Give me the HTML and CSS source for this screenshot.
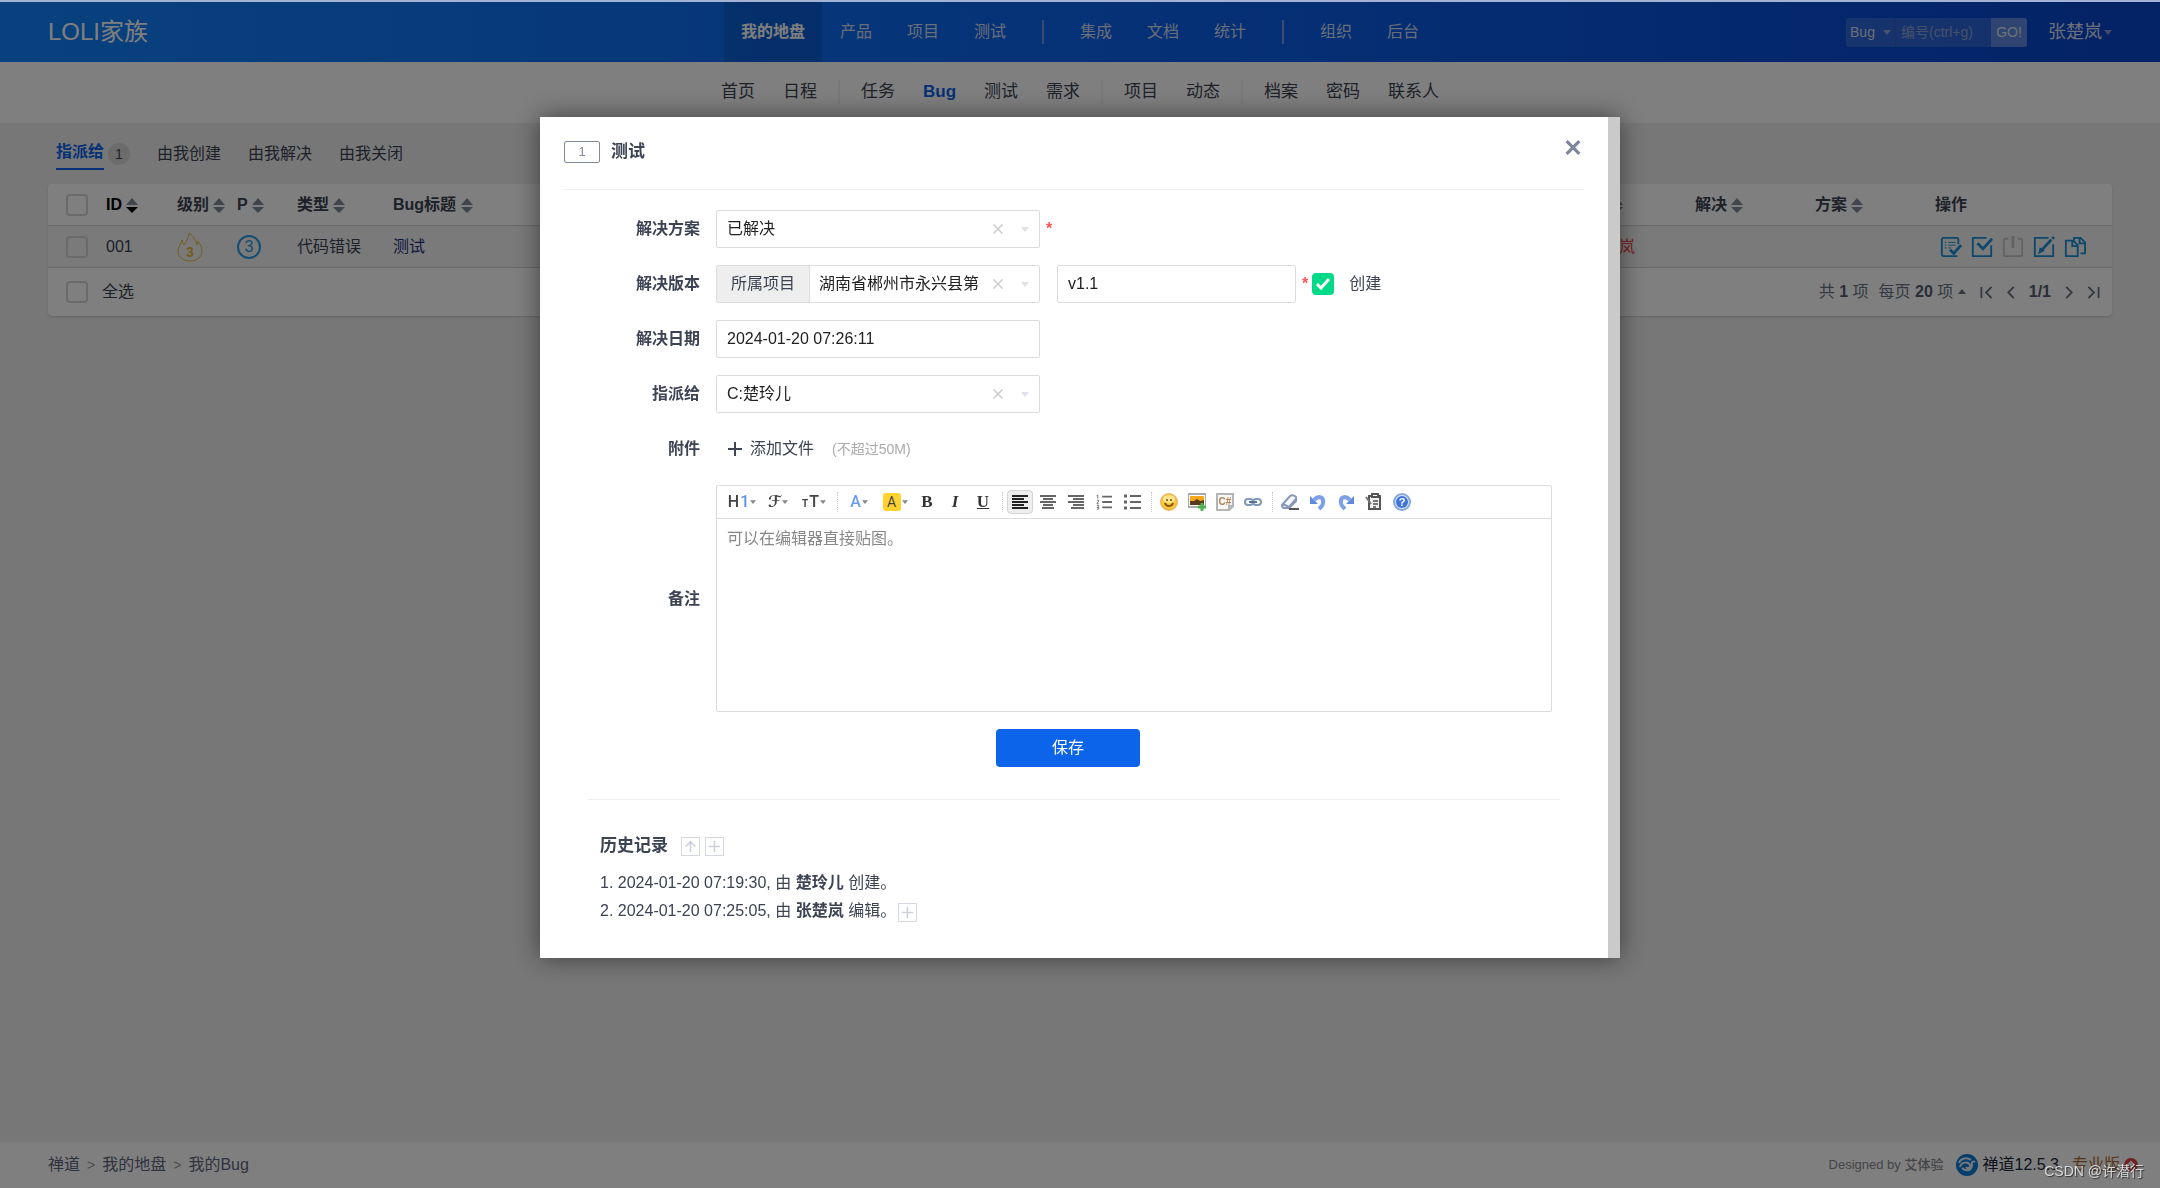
FILE: index.html
```html
<!DOCTYPE html>
<html lang="zh-CN">
<head>
<meta charset="utf-8">
<title>我的Bug - 禅道</title>
<link rel="stylesheet" href="styles.css">
</head>
<body>
<svg class="sprite" aria-hidden="true">
  <symbol id="sort" viewBox="0 0 12 15"><path d="M6 0l6 7H0zM0 9h12l-6 6z"/></symbol>
  <symbol id="caret" viewBox="0 0 8 5"><path d="M0 0h8L4 5z"/></symbol>
  <symbol id="cross" viewBox="0 0 16 16"><path d="M2 2l12 12M14 2L2 14"/></symbol>
  <symbol id="plus" viewBox="0 0 16 16"><path d="M8 1v14M1 8h14"/></symbol>
</svg>

<header class="topbar">
  <h1 class="brand">LOLI家族</h1>
  <nav class="mainnav">
    <a class="active" href="#">我的地盘</a><a href="#">产品</a><a href="#">项目</a><a href="#">测试</a>
    <span class="bar"></span>
    <a href="#">集成</a><a href="#">文档</a><a href="#">统计</a>
    <span class="bar"></span>
    <a href="#">组织</a><a href="#">后台</a>
  </nav>
  <div class="tools">
    <form class="search">
      <button class="kind" type="button">Bug <svg class="caret"><use href="#caret"/></svg></button>
      <input type="text" aria-label="编号" placeholder="编号(ctrl+g)">
      <button class="go" type="button">GO!</button>
    </form>
    <a class="user" href="#">张楚岚<svg class="caret"><use href="#caret"/></svg></a>
  </div>
</header>

<nav class="subnav">
  <a href="#">首页</a><a href="#">日程</a><span class="bar"></span>
  <a href="#">任务</a><a class="active" href="#">Bug</a><a href="#">测试</a><a href="#">需求</a><span class="bar"></span>
  <a href="#">项目</a><a href="#">动态</a><span class="bar"></span>
  <a href="#">档案</a><a href="#">密码</a><a href="#">联系人</a>
</nav>

<main class="main">
  <div class="tabs">
    <a class="active" href="#">指派给</a><span class="count">1</span>
    <a href="#">由我创建</a><a href="#">由我解决</a><a href="#">由我关闭</a>
  </div>
  <section class="card">
    <table class="bugs">
      <colgroup><col class="c-id"><col class="c-level"><col class="c-level"><col class="c-type"><col><col class="c-user"><col class="c-user"><col class="c-user"><col class="c-user"><col class="c-act"></colgroup>
      <thead>
        <tr>
          <th><div class="idcell"><input type="checkbox" aria-label="选择全部"><span class="sorted">ID <svg class="sort" viewBox="0 0 12 15"><path class="dim" d="M6 0l6 7H0z"/><path d="M0 9h12l-6 6z"/></svg></span></div></th>
          <th>级别 <svg class="sort"><use href="#sort"/></svg></th>
          <th>P <svg class="sort"><use href="#sort"/></svg></th>
          <th>类型 <svg class="sort"><use href="#sort"/></svg></th>
          <th>Bug标题 <svg class="sort"><use href="#sort"/></svg></th>
          <th>创建 <svg class="sort"><use href="#sort"/></svg></th>
          <th>指派 <svg class="sort"><use href="#sort"/></svg></th>
          <th>解决 <svg class="sort"><use href="#sort"/></svg></th>
          <th>方案 <svg class="sort"><use href="#sort"/></svg></th>
          <th>操作</th>
        </tr>
      </thead>
      <tbody>
        <tr>
          <td><div class="idcell"><input type="checkbox" aria-label="选择 001"><span>001</span></div></td>
          <td><svg class="flame" viewBox="0 0 26 30"><path d="M12 1c0 5-3 8-5 12-1-1-2-3-2-5-1 4-4 7-4 11 0 6 5 10 12 10s12-4 12-10c0-4-2-7-4-10 0 2-1 3-1 4-1-5-4-9-8-12z"/><text x="13" y="25">3</text></svg></td>
          <td><span class="pri">3</span></td>
          <td>代码错误</td>
          <td><a class="title" href="#">测试</a></td>
          <td>楚玲儿</td>
          <td><a class="assigned" href="#">张楚岚</a></td>
          <td></td>
          <td></td>
          <td>
            <div class="actions">
              <button aria-label="确认"><svg viewBox="0 0 24 24"><path d="M20 9V4q0-2-2-2H4Q2 2 2 4v16q0 2 2 2h15"/><path class="thin" d="M5 7h2M9 7h8M5 10h2M9 10h8M5 13h2M9 13h3"/><path class="bold" d="M11 15l4 4 8-9"/></svg></button>
              <button aria-label="解决"><svg viewBox="0 0 24 24"><path d="M17 2H2v20h20V10"/><path class="bold" d="M7 8l6 6L23 3"/></svg></button>
              <button aria-label="关闭" disabled><svg viewBox="0 0 24 24"><path d="M7 3H4Q2 3 2 5v15q0 2 2 2h16q2 0 2-2V5q0-2-2-2h-3"/><path class="bold" d="M12 0v13"/></svg></button>
              <button aria-label="编辑"><svg viewBox="0 0 24 24"><path d="M17 2H2v20h20V9"/><path class="bold" d="M9 16L20 4M21 3l2-2"/><path d="M7 18l1-4 3 2z"/></svg></button>
              <button aria-label="复制"><svg viewBox="0 0 24 24"><path d="M2 5h8l5 5v12H2zM9 5v6h6M11 5V2h7l5 5v12h-5M17 2v6h6"/></svg></button>
            </div>
          </td>
        </tr>
      </tbody>
    </table>
    <div class="cardfoot">
      <label class="all"><input type="checkbox">全选</label>
      <div class="pager">
        <span>共 <b>1</b> 项</span>
        <button class="per">每页 <b>20</b> 项 <svg class="caret up"><use href="#caret"/></svg></button>
        <button aria-label="首页"><svg class="wide" viewBox="0 0 13 14"><path d="M1 1v12M12 1L6 7l6 6"/></svg></button>
        <button aria-label="上一页"><svg viewBox="0 0 8 14"><path d="M7 1L1 7l6 6"/></svg></button>
        <b>1/1</b>
        <button aria-label="下一页"><svg viewBox="0 0 8 14"><path d="M1 1l6 6-6 6"/></svg></button>
        <button aria-label="末页"><svg class="wide" viewBox="0 0 13 14"><path d="M12 1v12M1 1l6 6-6 6"/></svg></button>
      </div>
    </div>
  </section>
</main>

<footer class="footer">
  <div class="crumbs"><a href="#">禅道</a><i>&gt;</i><a href="#">我的地盘</a><i>&gt;</i><a href="#">我的Bug</a></div>
  <div class="about">
    <span class="by">Designed by <b>艾体验</b></span>
    <a class="version" href="#"><svg viewBox="0 0 22 22"><circle cx="11" cy="11" r="11"/><path d="M3 9c2-5 8-6 12-3M4 13c1-5 8-6 10-2 1 3-3 4-4 2M19 8c-2-1-4 0-3 3 0 4-3 6-6 5-2 0-3-1-4-2"/></svg>禅道12.5.3</a>
    <a class="pro" href="#">专业版<svg viewBox="0 0 14 14"><circle cx="7" cy="7" r="7"/><path d="M7 11V4M4 7l3-3 3 3"/></svg></a>
  </div>
</footer>

<div class="backdrop">
  <div class="modal" role="dialog" aria-labelledby="dlg-title">
    <div class="dlghead">
      <span class="num">1</span>
      <h2 id="dlg-title">测试</h2>
      <button class="close" aria-label="关闭"><svg><use href="#cross"/></svg></button>
    </div>
    <form class="fields">
      <label for="resolution">解决方案</label>
      <div class="line">
        <div class="picker short">
          <select id="resolution"><option>已解决</option></select>
          <button type="button" aria-label="清除"><svg><use href="#cross"/></svg></button>
          <svg class="caret"><use href="#caret"/></svg>
        </div>
        <span class="req">*</span>
      </div>

      <label for="project">解决版本</label>
      <div class="line">
        <div class="picker short">
          <span class="addon">所属项目</span>
          <select id="project" class="tight"><option>湖南省郴州市永兴县第</option></select>
          <button type="button" aria-label="清除"><svg><use href="#cross"/></svg></button>
          <svg class="caret"><use href="#caret"/></svg>
        </div>
        <input class="box build" type="text" aria-label="版本" value="v1.1">
        <span class="req">*</span>
        <label class="create"><input type="checkbox" checked>创建</label>
      </div>

      <label for="date">解决日期</label>
      <div class="line"><input id="date" class="box short" type="text" value="2024-01-20 07:26:11"></div>

      <label for="assign">指派给</label>
      <div class="line">
        <div class="picker short">
          <select id="assign"><option>C:楚玲儿</option></select>
          <button type="button" aria-label="清除"><svg><use href="#cross"/></svg></button>
          <svg class="caret"><use href="#caret"/></svg>
        </div>
      </div>

      <span class="label">附件</span>
      <div class="line">
        <button class="attach" type="button"><svg><use href="#plus"/></svg>添加文件</button>
        <span class="hint">(不超过50M)</span>
      </div>

      <label for="comment">备注</label>
      <div class="editor">
        <div class="toolbar">
          <button type="button" class="drop head">H<em>1</em><svg class="caret"><use href="#caret"/></svg></button>
          <button type="button" class="drop script">ℱ<svg class="caret"><use href="#caret"/></svg></button>
          <button type="button" class="drop head"><small>T</small>T<svg class="caret"><use href="#caret"/></svg></button>
          <span class="dots"></span>
          <button type="button" class="drop color">A<svg class="caret"><use href="#caret"/></svg></button>
          <button type="button" class="drop"><mark>A</mark><svg class="caret"><use href="#caret"/></svg></button>
          <button type="button" class="serif">B</button>
          <button type="button" class="serif it">I</button>
          <button type="button" class="serif un">U</button>
          <span class="dots"></span>
          <button type="button" class="on" aria-label="左对齐"><svg viewBox="0 0 18 16"><path d="M1 2h16M1 5h12M1 8h16M1 11h12M1 14h16"/></svg></button>
          <button type="button" aria-label="居中"><svg viewBox="0 0 18 16"><path d="M1 2h16M4 5h10M1 8h16M4 11h10M3 14h12"/></svg></button>
          <button type="button" aria-label="右对齐"><svg viewBox="0 0 18 16"><path d="M1 2h16M6 5h11M1 8h16M6 11h11M4 14h13"/></svg></button>
          <button type="button" aria-label="编号"><svg viewBox="0 0 18 18"><path d="M7 3h11M7 9h11M7 15h11"/><path class="fine" d="M1 2l1-1v4M1 7h2v1L1 11h2M1 13h2v4H1M1 15h2"/></svg></button>
          <button type="button" aria-label="项目符号"><svg viewBox="0 0 18 16"><path d="M7 2h11M7 8h11M7 14h11"/><path class="bul" d="M1 2h3M1 8h3M1 14h3"/></svg></button>
          <span class="dots"></span>
          <button type="button" aria-label="表情"><svg class="art" viewBox="0 0 18 18"><circle cx="9" cy="9" r="8" fill="#fcc83c" stroke="#eeb857"/><ellipse cx="9" cy="6" rx="6" ry="4" fill="#fde68a"/><path d="M5 10c1 4 7 4 8 0" fill="none" stroke="#8a5a10"/><circle cx="7" cy="7" r="1" fill="#6b4a10"/><circle cx="11" cy="7" r="1" fill="#6b4a10"/></svg></button>
          <button type="button" aria-label="图片"><svg class="art" viewBox="0 0 18 18"><path d="M0 1h18v13H0z" fill="#fff" stroke="#aaa"/><path d="M2 3h14v9H2z" fill="#f7a81b"/><path d="M2 8l4 0 3-2 3 2 4-1v5H2z" fill="#5a3c1c"/><path d="M14 10v8M10 14h8" stroke="#4caf50" stroke-width="3"/></svg></button>
          <button type="button" aria-label="代码"><svg class="art" viewBox="0 0 18 18"><path d="M1 1h16v12l-4 4H1z" fill="#f7f7f7" stroke="#b5b5b5"/><path d="M17 13h-4v4z" fill="#ddd" stroke="#b5b5b5"/><text x="9" y="12">C#</text></svg></button>
          <button type="button" aria-label="链接"><svg class="art" viewBox="0 0 18 18"><g fill="none" stroke="#8298b8" stroke-width="2"><rect x="1" y="6" width="8" height="6" rx="3"/><rect x="9" y="6" width="8" height="6" rx="3"/></g><path d="M5 9h8" stroke="#5c7396"/></svg></button>
          <span class="dots"></span>
          <button type="button" aria-label="清除格式"><svg class="art" viewBox="0 0 18 18"><path d="M1 12L9 3q3-2 6 1v4l-7 7H3q-2 0-2-3z" fill="#f4f7fc" stroke="#8698bb"/><path d="M1 12q4-1 7 3M8 14l7-8" fill="none" stroke="#8698bb"/><path d="M8 16h10" stroke="#555"/></svg></button>
          <button type="button" aria-label="撤销"><svg class="art" viewBox="0 0 18 18"><path d="M5 7c5-5 10-3 9 3 0 3-2 4-4 6" fill="none" stroke="#7ba0e8" stroke-width="4"/><path d="M1 3v8h8z" fill="#5f8ae0"/></svg></button>
          <button type="button" aria-label="重做"><svg class="art" viewBox="0 0 18 18"><path d="M13 7C8 2 3 4 4 10c0 3 2 4 4 6" fill="none" stroke="#7ba0e8" stroke-width="4"/><path d="M17 3v8H9z" fill="#5f8ae0"/></svg></button>
          <button type="button" aria-label="粘贴"><svg class="art" viewBox="0 0 18 18"><path d="M4 3h11v13H4z" fill="#eee" stroke="#555" stroke-width="2"/><path d="M7 1h6v3H7z" fill="#fff" stroke="#555"/><path d="M8 8h5M8 11h5M8 14h3M1 4l5 7" stroke="#777"/></svg></button>
          <button type="button" aria-label="帮助"><svg class="art" viewBox="0 0 18 18"><circle cx="9" cy="9" r="8" fill="#dbe8fb" stroke="#86a8dd"/><circle cx="9" cy="9" r="6" fill="#3f74de"/><text class="q" x="9" y="13">?</text></svg></button>
        </div>
        <textarea id="comment" placeholder="可以在编辑器直接贴图。"></textarea>
      </div>

      <button class="save" type="button">保存</button>
    </form>
    <section class="history">
      <div class="histhead">
        <h3>历史记录</h3>
        <button class="sq" aria-label="倒序"><svg viewBox="0 0 16 16"><path d="M8 15V2M2 8l6-6 6 6"/></svg></button>
        <button class="sq" aria-label="展开"><svg><use href="#plus"/></svg></button>
      </div>
      <ol>
        <li>1. 2024-01-20 07:19:30, 由 <b>楚玲儿</b> 创建。</li>
        <li>2. 2024-01-20 07:25:05, 由 <b>张楚岚</b> 编辑。<button class="sq" aria-label="展开详情"><svg><use href="#plus"/></svg></button></li>
      </ol>
    </section>
  </div>
</div>
<div class="mark">CSDN @许潜行</div>
</body>
</html>
```
FILE: styles.css
```css
* { box-sizing: border-box; }
body {
  margin: 0;
  min-height: 100vh;
  display: flex;
  flex-direction: column;
  border-top: 2px solid #a3b3d3;
  background: #efefef;
  color: #3c4353;
  font: 16px/24px "Liberation Sans", Arial, "Noto Sans CJK SC", sans-serif;
}
a { color: inherit; text-decoration: none; }
button, input, select, textarea { font: inherit; color: inherit; }
button { padding: 0; border: 0; background: none; }
h1, h2, h3, ol { margin: 0; padding: 0; }
.sprite { display: none; }
.caret { width: 8px; height: 5px; fill: currentColor; flex: none; }

/* top bar */
.topbar {
  display: grid;
  grid-template-columns: 1fr auto 1fr;
  align-items: center;
  height: 60px;
  padding: 0 48px;
  background: linear-gradient(90deg, #1183fb 0%, #0c64f0 50%, #0845cc 100%);
  color: #fff;
}
.brand { font-size: 24px; line-height: 60px; font-weight: 400; }
.mainnav { display: flex; align-items: center; gap: 1px; color: #d4dcf0; }
.mainnav a { padding: 0 17px; line-height: 60px; }
.mainnav .active { background: rgba(0, 0, 0, .12); color: #fff; font-weight: 700; }
.mainnav .bar { width: 2px; height: 24px; margin: 0 18px; background: #7a9be0; }
.tools { display: flex; justify-content: flex-end; align-items: center; gap: 21px; color: #d8dff0; }
.search { display: flex; align-items: stretch; height: 29px; font-size: 14px; line-height: 29px; }
.search .kind { width: 49px; background: rgba(255, 255, 255, .15); border-radius: 3px 0 0 3px; display: flex; align-items: center; justify-content: space-around; }
.search .caret { fill: #8fa5d8; }
.search input { width: 96px; padding: 0 5px; border: 0; border-left: 1px solid #3a5cb0; background: rgba(255, 255, 255, .15); }
.search input::placeholder { color: #8fa2d2; opacity: 1; }
.search .go { width: 36px; background: rgba(255, 255, 255, .35); border-radius: 0 3px 3px 0; color: #dfe5f2; }
.user { display: flex; align-items: center; gap: 2px; font-size: 18px; }
.user .caret { fill: #7f97d0; }

/* second level navigation */
.subnav { display: flex; justify-content: center; align-items: center; height: 61px; padding-bottom: 1px; background: #fff; font-size: 17px; line-height: 24px; }
.subnav a { padding: 0 14px; }
.subnav .active { color: #0c64eb; font-weight: 700; }
.subnav .bar { width: 2px; height: 24px; margin: 0 7px; background: #f0f0f0; }

/* list */
.main { padding: 14px 48px; }
.tabs { display: flex; align-items: center; height: 33px; margin: 0 8px 14px; gap: 27px; }
.tabs .active { height: 33px; line-height: 30px; border-bottom: 2px solid #0c64eb; color: #0c64eb; font-weight: 700; margin-right: -23px; }
.tabs .count { width: 22px; height: 22px; border-radius: 11px; background: #d8d8d8; font-size: 14px; line-height: 22px; text-align: center; }
.card { background: #fff; border-radius: 4px; box-shadow: 0 1px 2px rgba(0, 0, 0, .15); }
.bugs { width: 100%; table-layout: fixed; border-collapse: separate; border-spacing: 0; }
.c-id { width: 124px; }
.c-level { width: 60px; }
.c-type { width: 96px; }
.c-user { width: 120px; }
.c-act { width: 182px; }
.bugs th, .bugs td { height: 42px; padding: 0 0 0 5px; border-bottom: 1px solid #d2d2d2; text-align: left; white-space: nowrap; }
.bugs td { background: #f5f5f5; }
.bugs td > svg, .pri { vertical-align: middle; }
.idcell { display: flex; align-items: center; gap: 18px; padding-left: 13px; }
.sorted, .sorted .sort { color: #000; fill: #000; }
.sorted .dim { fill: #838a9d; }
.sort { width: 12px; height: 15px; fill: #838a9d; vertical-align: -3px; }
input[type="checkbox"] { appearance: none; width: 22px; height: 22px; margin: 0; border: 2px solid #d4d4d4; border-radius: 4px; background: #fff; flex: none; }
.bugs input[type="checkbox"], .cardfoot input[type="checkbox"] { background: transparent; }
.flame { width: 26px; height: 30px; fill: none; stroke: #e8b93a; stroke-width: 1; }
.flame text { fill: #e8b93a; stroke: none; font-size: 14px; font-weight: 700; text-anchor: middle; }
.pri { display: inline-block; width: 24px; height: 24px; border: 2px solid #2b9be8; border-radius: 12px; color: #2b9be8; line-height: 20px; text-align: center; }
.title { color: #1c2d80; }
.assigned { padding-left: 12px; color: #f04848; }
.actions { display: flex; gap: 9px; padding-left: 5px; }
.actions button { width: 22px; height: 22px; }
.actions svg { display: block; width: 22px; height: 22px; fill: none; stroke: #1a8fd8; stroke-width: 2; overflow: visible; }
.actions :disabled svg { stroke: #c4c4c4; }
.actions .thin { stroke-width: 1; }
.actions .bold { stroke-width: 3; }
.cardfoot { display: flex; justify-content: space-between; align-items: center; height: 48px; padding: 0 12px 0 18px; }
.all { display: flex; align-items: center; gap: 14px; }
.pager { display: flex; align-items: center; gap: 14px; color: #6b7283; }
.pager > span { margin-right: -4px; }
.pager svg { display: block; width: 8px; height: 13px; fill: none; stroke: #6b7283; stroke-width: 2; }
.pager .wide { width: 13px; }
.pager .up { display: inline-block; width: 8px; height: 5px; fill: #6b7283; stroke: none; vertical-align: 3px; transform: rotate(180deg); }
.pager b { color: #555c6e; }

/* page footer */
.footer { display: flex; justify-content: space-between; align-items: center; height: 46px; margin-top: auto; padding: 0 22px 0 48px; background: #fff; }
.crumbs { display: flex; gap: 7px; color: #5f6680; }
.crumbs i { font-style: normal; font-size: 14px; color: #a0a0a0; }
.about { display: flex; align-items: center; gap: 13px; }
.by { font-size: 13px; color: #8a8a8f; }
.by b { font-weight: 500; }
.version, .pro { display: flex; align-items: center; gap: 4px; }
.version { color: #22283a; }
.version svg { width: 22px; height: 22px; fill: #0b7ad8; }
.version path { fill: none; stroke: #e8f0f8; stroke-width: 2; }
.pro { color: #b06a30; }
.pro svg { width: 14px; height: 14px; fill: #e04040; }
.pro path { fill: none; stroke: #fff; stroke-width: 2; }
.mark { position: fixed; right: 16px; bottom: 5px; z-index: 20; color: #d8d8d8; font-size: 14px; line-height: 24px; text-shadow: 1px 1px 1px #333; }

/* dialog */
.backdrop { position: fixed; inset: 2px 0 0; z-index: 10; display: flex; justify-content: center; align-items: flex-start; padding-top: 115px; background: rgba(0, 0, 0, .5); }
.modal { width: 50%; padding: 0 24px 33px; border-right: 12px solid #cacaca; background: #fff; box-shadow: 0 0 24px rgba(0, 0, 0, .5); }
.dlghead { display: flex; align-items: center; gap: 11px; padding: 22px 0 26px; border-bottom: 1px solid #eee; }
.num { width: 36px; height: 22px; margin-top: 2px; border: 1px solid #838a9d; border-radius: 2px; color: #838a9d; font-size: 13px; line-height: 20px; text-align: center; }
.dlghead h2 { margin-top: 2px; font-size: 17px; line-height: 22px; }
.close { align-self: flex-start; margin-left: auto; padding-right: 2px; height: 16px; }
.close svg { display: block; width: 18px; height: 17px; fill: none; stroke: #7d869c; stroke-width: 3; }
.fields { display: grid; grid-template-columns: 116px 1fr; gap: 17px 16px; align-items: center; padding: 20px 32px 32px 20px; }
.fields > label, .label { text-align: right; font-weight: 700; }
.line { display: flex; align-items: center; height: 38px; }
.short { width: 324px; }
.box, .picker { height: 38px; border: 1px solid #dcdcdc; border-radius: 2px; background: #fff; color: #222; }
.box { padding: 0 10px; }
.build { width: 239px; margin-left: 17px; }
.picker { display: flex; align-items: center; }
.picker select { flex: 1; min-width: 0; height: 36px; padding: 0 0 0 10px; border: 0; background: none; appearance: none; }
.picker .tight { padding-left: 9px; }
.picker button svg { display: block; width: 12px; height: 12px; fill: none; stroke: #ccc; stroke-width: 2; }
.picker .caret { margin: 0 10px 0 17px; fill: #dfe1ea; }
.addon { width: 93px; line-height: 36px; border-right: 1px solid #dcdcdc; background: #eee; color: #3c4353; text-align: center; }
.req { padding: 0 4px 0 6px; color: #f55; font-weight: 700; }
.create { display: flex; align-items: center; gap: 15px; }
.create input:checked { border: 0; background: #00da88 url("data:image/svg+xml,%3Csvg xmlns='http://www.w3.org/2000/svg' viewBox='0 0 22 22'%3E%3Cpath d='M5 11l4 4 8-9' fill='none' stroke='white' stroke-width='3'/%3E%3C/svg%3E"); }
.attach { display: flex; align-items: center; gap: 7px; padding-left: 11px; }
.attach svg { width: 16px; height: 16px; fill: none; stroke: #3c4353; stroke-width: 2; }
.hint { margin-left: 18px; color: #aaa; font-size: 14px; }

.editor { height: 227px; display: flex; flex-direction: column; border: 1px solid #dcdcdc; border-radius: 2px; }
.toolbar { display: flex; align-items: center; gap: 2px; height: 33px; padding-left: 8px; border-bottom: 1px solid #dcdcdc; }
.toolbar button { display: flex; align-items: center; justify-content: center; width: 26px; height: 24px; color: #444; }
.toolbar .drop { width: 34px; gap: 1px; }
.toolbar .caret { width: 6px; height: 4px; fill: #888; stroke: none; }
.toolbar .head, .toolbar .color { font-family: Roboto, sans-serif; font-size: 16px; font-weight: 500; }
.toolbar em { color: #5b8ff0; font-style: normal; }
.toolbar small { align-self: flex-end; font-size: 10px; line-height: 20px; font-weight: 700; }
.toolbar .script { font-family: "DejaVu Sans", sans-serif; font-weight: 700; }
.toolbar .color { color: #6b9bf5; }
.toolbar mark { width: 18px; height: 18px; border-radius: 3px; background: #ffd22e; color: #444; font: 14px/18px Roboto, sans-serif; }
.toolbar .serif { font: 700 17px/20px "Liberation Serif", serif; color: #333; }
.toolbar .it { font-style: italic; }
.toolbar .un { text-decoration: underline; }
.toolbar .on { border: 1px solid #d5d5d5; border-radius: 4px; background: #eee; }
.toolbar svg { width: 18px; height: 16px; flex: none; fill: none; stroke: #666; stroke-width: 2; }
.toolbar .on svg { stroke: #222; }
.toolbar .fine { stroke-width: 1; }
.toolbar .bul { stroke-width: 3; }
.toolbar .art { width: 18px; height: 18px; stroke: none; }
.art text { fill: #b08450; font-size: 10px; font-weight: 700; text-anchor: middle; }
.art .q { fill: #fff; font-size: 11px; }
.dots { height: 20px; margin: 0 2px 0 4px; border-left: 1px dotted #ccc; }
.editor textarea { flex: 1; padding: 8px 10px; border: 0; resize: none; outline: 0; background: none; }
.editor textarea::placeholder { color: #888; opacity: 1; }
.save { grid-column: 1 / -1; justify-self: center; width: 144px; height: 38px; border-radius: 4px; background: #0c64eb; color: #fff; }

.history { margin: 0 24px; padding: 36px 12px 0; border-top: 1px solid #eee; }
.histhead { display: flex; align-items: center; gap: 5px; height: 20px; margin-bottom: 13px; }
.histhead h3 { margin-right: 8px; font-size: 17px; line-height: 20px; }
.sq { display: inline-flex; align-items: center; justify-content: center; width: 19px; height: 19px; border: 1px solid #d5d8e3; }
.sq svg { width: 13px; height: 13px; fill: none; stroke: #cdd1de; stroke-width: 2; }
.history ol { list-style: none; }
.history li { display: flow-root; height: 28px; line-height: 28px; }
.history li .sq { margin-left: 2px; vertical-align: -3px; }
```
